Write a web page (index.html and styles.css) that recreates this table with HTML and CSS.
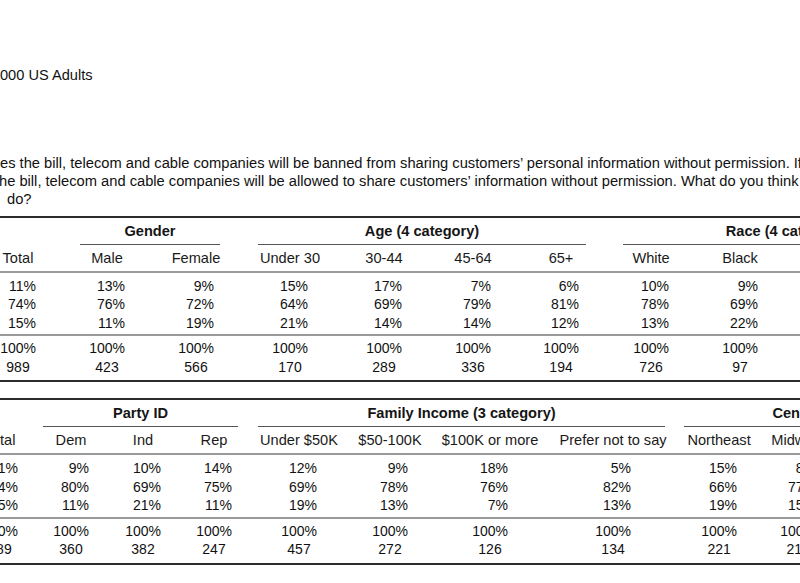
FILE: index.html
```html
<!DOCTYPE html>
<html lang="en">
<head>
<meta charset="utf-8">
<title>Crosstab</title>
<link rel="stylesheet" href="styles.css">
</head>
<body>
<div class="title">000 US Adults</div>
<div class="question">
  <span class="ln l1">es the bill, telecom and cable companies will be banned from sharing customers’ personal information without permission. If Congress rejects the bill, telecom and cable</span>
  <span class="ln l2">he bill, telecom and cable companies will be allowed to share customers’ information without permission. What do you think Congress should</span>
  <span class="ln l3">do?</span>
</div>

<table class="xt xt1">
  <colgroup>
    <col class="c-lab"><col class="a1"><col class="a2"><col class="a3"><col class="a4"><col class="a5"><col class="a6"><col class="a7"><col class="a8"><col class="a9"><col class="a10"><col class="a11">
  </colgroup>
  <thead>
    <tr class="grp">
      <th></th><th></th>
      <th colspan="2"><div class="gl g-gender">Gender</div></th>
      <th colspan="4"><div class="gl g-age">Age (4 category)</div></th>
      <th colspan="4"><div class="gl g-race">Race (4 category)</div></th>
    </tr>
    <tr class="hdr">
      <th></th><th>Total</th><th>Male</th><th>Female</th><th>Under 30</th><th>30-44</th><th>45-64</th><th>65+</th><th>White</th><th>Black</th><th>Hispanic</th><th>Other</th>
    </tr>
  </thead>
  <tbody class="pct">
    <tr><td class="lab">Congress should pass the bill</td><td><span class="v">11%</span></td><td><span class="v">13%</span></td><td><span class="v">9%</span></td><td><span class="v">15%</span></td><td><span class="v">17%</span></td><td><span class="v">7%</span></td><td><span class="v">6%</span></td><td><span class="v">10%</span></td><td><span class="v">9%</span></td><td></td><td></td></tr>
    <tr><td class="lab">Congress should reject the bill</td><td><span class="v">74%</span></td><td><span class="v">76%</span></td><td><span class="v">72%</span></td><td><span class="v">64%</span></td><td><span class="v">69%</span></td><td><span class="v">79%</span></td><td><span class="v">81%</span></td><td><span class="v">78%</span></td><td><span class="v">69%</span></td><td></td><td></td></tr>
    <tr><td class="lab">Not sure</td><td><span class="v">15%</span></td><td><span class="v">11%</span></td><td><span class="v">19%</span></td><td><span class="v">21%</span></td><td><span class="v">14%</span></td><td><span class="v">14%</span></td><td><span class="v">12%</span></td><td><span class="v">13%</span></td><td><span class="v">22%</span></td><td></td><td></td></tr>
  </tbody>
  <tbody class="tot">
    <tr><td class="lab">Totals</td><td><span class="v">100%</span></td><td><span class="v">100%</span></td><td><span class="v">100%</span></td><td><span class="v">100%</span></td><td><span class="v">100%</span></td><td><span class="v">100%</span></td><td><span class="v">100%</span></td><td><span class="v">100%</span></td><td><span class="v">100%</span></td><td></td><td></td></tr>
    <tr><td class="lab">Unweighted N</td><td>989</td><td>423</td><td>566</td><td>170</td><td>289</td><td>336</td><td>194</td><td>726</td><td>97</td><td></td><td></td></tr>
  </tbody>
</table>

<table class="xt xt2">
  <colgroup>
    <col class="c-lab"><col class="b1"><col class="b2"><col class="b3"><col class="b4"><col class="b5"><col class="b6"><col class="b7"><col class="b8"><col class="b9"><col class="b10"><col class="b11"><col class="b12">
  </colgroup>
  <thead>
    <tr class="grp">
      <th></th><th></th>
      <th colspan="3"><div class="gl g-party">Party ID</div></th>
      <th colspan="4"><div class="gl g-income">Family Income (3 category)</div></th>
      <th colspan="4"><div class="gl g-census">Census Region</div></th>
    </tr>
    <tr class="hdr">
      <th></th><th>Total</th><th>Dem</th><th>Ind</th><th>Rep</th><th>Under $50K</th><th>$50-100K</th><th>$100K or more</th><th>Prefer not to say</th><th>Northeast</th><th>Midwest</th><th>South</th><th>West</th>
    </tr>
  </thead>
  <tbody class="pct">
    <tr><td class="lab">Congress should pass the bill</td><td><span class="v">11%</span></td><td><span class="v">9%</span></td><td><span class="v">10%</span></td><td><span class="v">14%</span></td><td><span class="v">12%</span></td><td><span class="v">9%</span></td><td><span class="v">18%</span></td><td><span class="v">5%</span></td><td><span class="v">15%</span></td><td><span class="v">8%</span></td><td></td><td></td></tr>
    <tr><td class="lab">Congress should reject the bill</td><td><span class="v">74%</span></td><td><span class="v">80%</span></td><td><span class="v">69%</span></td><td><span class="v">75%</span></td><td><span class="v">69%</span></td><td><span class="v">78%</span></td><td><span class="v">76%</span></td><td><span class="v">82%</span></td><td><span class="v">66%</span></td><td><span class="v">77%</span></td><td></td><td></td></tr>
    <tr><td class="lab">Not sure</td><td><span class="v">15%</span></td><td><span class="v">11%</span></td><td><span class="v">21%</span></td><td><span class="v">11%</span></td><td><span class="v">19%</span></td><td><span class="v">13%</span></td><td><span class="v">7%</span></td><td><span class="v">13%</span></td><td><span class="v">19%</span></td><td><span class="v">15%</span></td><td></td><td></td></tr>
  </tbody>
  <tbody class="tot">
    <tr><td class="lab">Totals</td><td><span class="v">100%</span></td><td><span class="v">100%</span></td><td><span class="v">100%</span></td><td><span class="v">100%</span></td><td><span class="v">100%</span></td><td><span class="v">100%</span></td><td><span class="v">100%</span></td><td><span class="v">100%</span></td><td><span class="v">100%</span></td><td><span class="v">100%</span></td><td></td><td></td></tr>
    <tr><td class="lab">Unweighted N</td><td>989</td><td>360</td><td>382</td><td>247</td><td>457</td><td>272</td><td>126</td><td>134</td><td>221</td><td>216</td><td></td><td></td></tr>
  </tbody>
</table>
</body>
</html>
```
FILE: styles.css
```css
html, body {
  margin: 0;
  padding: 0;
}

body {
  width: 800px;
  height: 583px;
  overflow: hidden;
  background: #ffffff;
  color: #111111;
  font-family: "Liberation Sans", Arial, sans-serif;
  font-size: 14.6px;
}

.title {
  margin-top: 66px;
  line-height: 18px;
  white-space: nowrap;
}

.question {
  margin-top: 70px;
  line-height: 18.2px;
  white-space: nowrap;
  font-size: 14.7px;
}

.question .ln {
  display: block;
}

.question .l2 {
  text-indent: -1px;
}

.question .l3 {
  padding-left: 7px;
}

/* crosstab tables */
.xt {
  border-collapse: separate;
  border-spacing: 0;
  table-layout: fixed;
}

.xt1 {
  width: 1178px;
  margin: 7px 0 0 -218px;
}

.xt2 {
  width: 1212px;
  margin: 16px 0 0 -236px;
}

.c-lab { width: 200px; }

/* table 1 columns */
.a1 { width: 72px; }
.a2 { width: 106px; }
.a3 { width: 72px; }
.a4 { width: 116px; }
.a5 { width: 72px; }
.a6 { width: 106px; }
.a7 { width: 70px; }
.a8 { width: 110px; }
.a9 { width: 68px; }
.a10 { width: 110px; }
.a11 { width: 76px; }

/* table 2 columns */
.b1 { width: 72px; }
.b2 { width: 70px; }
.b3 { width: 74px; }
.b4 { width: 68px; }
.b5 { width: 102px; }
.b6 { width: 80px; }
.b7 { width: 120px; }
.b8 { width: 126px; }
.b9 { width: 86px; }
.b10 { width: 72px; }
.b11 { width: 72px; }
.b12 { width: 70px; }

.xt th,
.xt td {
  padding: 0;
  text-align: center;
  white-space: nowrap;
  overflow: hidden;
}

.xt .grp th {
  border-top: 2px solid #2b2b2b;
  vertical-align: bottom;
  font-weight: bold;
  overflow: visible;
}

.gl {
  line-height: 26px;
  border-bottom: 1px solid #555555;
  color: #151515;
}

.g-gender { margin: 0 12px 0 26px; }
.g-age { margin: 0 10px 0 26px; }
.g-race { margin: 0 10px 0 27px; }
.g-party { margin: 0 10px 0 7px; }
.g-income { margin: 0 11px 0 10px; }
.g-census { margin: 0 9px 0 8px; }

.xt .hdr th {
  font-weight: normal;
  line-height: 26px;
  border-bottom: 2px solid #9a9a9a;
  color: #1a1a1a;
}

.xt tbody td {
  line-height: 18.5px;
  font-size: 14px;
}

.xt td.lab {
  text-align: left;
  font-size: 14.6px;
}

.pct tr:first-child td {
  padding-top: 4px;
}

.pct tr:last-child td {
  padding-bottom: 2px;
}

.tot tr:first-child td {
  border-top: 2px solid #9a9a9a;
  padding-top: 3px;
}

.tot tr:last-child td {
  border-bottom: 2px solid #2b2b2b;
  padding-bottom: 4px;
}

.v {
  display: inline-block;
  width: 36px;
  text-align: right;
}
```
